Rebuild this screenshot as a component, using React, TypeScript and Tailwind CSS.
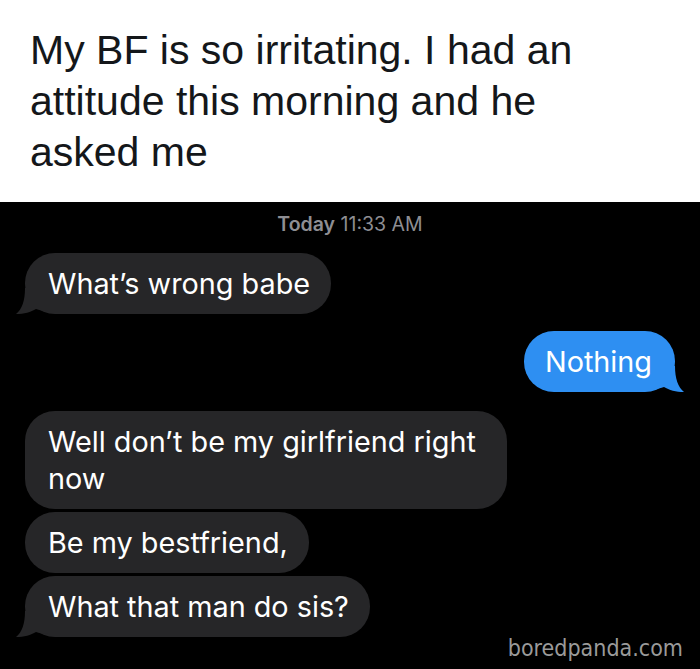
import React from "react";

const SF = { fontFamily: "Inter, 'Noto Sans', sans-serif" };

function TailLeft({ color }: { color: string }) {
  return (
    <svg
      className="absolute bottom-0 left-[-9px]"
      width="32"
      height="26"
      viewBox="0 0 32 26"
    >
      <path
        d="M9 0 C9 13 6 21 0 26 C8 26 15 24 20 21 C23 22 27 23 32 23 L32 0 Z"
        fill={color}
      />
    </svg>
  );
}

function TailRight({ color }: { color: string }) {
  return (
    <svg
      className="absolute bottom-0 right-[-9px]"
      width="32"
      height="26"
      viewBox="0 0 32 26"
    >
      <path
        d="M23 0 C23 13 26 21 32 26 C24 26 17 24 12 21 C9 22 5 23 0 23 L0 0 Z"
        fill={color}
      />
    </svg>
  );
}

function Incoming({ children, tail }: { children: React.ReactNode; tail?: boolean }) {
  return (
    <div className="flex justify-start pl-[25px]">
      <div
        className="relative max-w-[482px] rounded-[30px] bg-[#262628] py-[12px] pl-[23px] pr-[21px] text-[28.8px] leading-[37px] text-white"
        style={SF}
      >
        {tail && <TailLeft color="#262628" />}
        <span className="relative">{children}</span>
      </div>
    </div>
  );
}

export default function App() {
  return (
    <div className="flex h-[669px] w-[700px] flex-col overflow-hidden bg-black">
      <div className="bg-white pb-[24px] pl-[30px] pr-[60px] pt-[25px]">
        <p
          className="text-[41px] leading-[51px] text-[#14171a]"
          style={{ fontFamily: "'Liberation Sans', Arial, sans-serif" }}
        >
          My BF is so irritating. I had an attitude this morning and he asked me
        </p>
      </div>
      <div className="relative flex flex-1 flex-col bg-black">
        <div
          className="pt-[11px] text-center text-[19.5px] leading-[23px] text-[#8e8e93]"
          style={SF}
        >
          <span className="font-semibold">Today</span> 11:33 AM
        </div>
        <div className="mt-[17px]">
          <Incoming tail>What’s wrong babe</Incoming>
        </div>
        <div className="mt-[17px] flex justify-end pr-[25px]">
          <div
            className="relative rounded-[30px] bg-[#2e8ff2] py-[12px] pl-[21px] pr-[23px] text-[28.8px] leading-[37px] text-white"
            style={SF}
          >
            <TailRight color="#2e8ff2" />
            <span className="relative">Nothing</span>
          </div>
        </div>
        <div className="mt-[19px] flex flex-col gap-[3px]">
          <Incoming>Well don’t be my girlfriend right now</Incoming>
          <Incoming>Be my bestfriend,</Incoming>
          <Incoming tail>What that man do sis?</Incoming>
        </div>
        <div
          className="absolute bottom-[8px] right-[17px] text-[23px] leading-[26px] text-[#9a9a9a]"
          style={{ fontFamily: "'DejaVu Sans Condensed', 'DejaVu Sans', sans-serif", fontStretch: "condensed" }}
        >
          boredpanda.com
        </div>
      </div>
    </div>
  );
}
